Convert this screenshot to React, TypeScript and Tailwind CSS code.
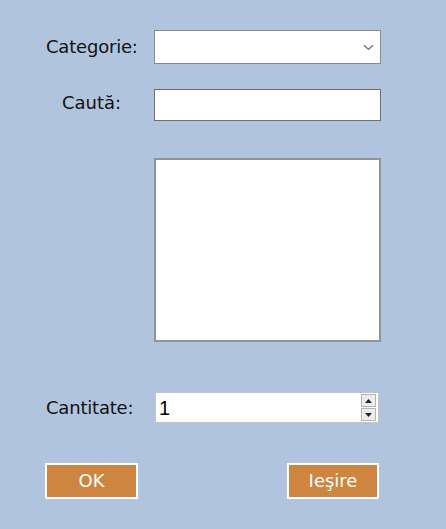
import React from "react";

export default function App() {
  return (
    <div className="w-[446px] h-[529px] bg-[#b0c4de] flex flex-col text-[#111] font-['Comic_Sans_MS','DejaVu_Sans',sans-serif]">
      {/* Categorie */}
      <div className="flex items-center mt-[30px] h-[34px]">
        <span className="ml-[46px] w-[108px] text-[18px] leading-none tracking-[-0.2px]">Categorie:</span>
        <div className="w-[227px] h-[34px] bg-white border border-[#8a8a8a] flex items-center justify-end pr-[6px]">
          <svg width="11" height="7" viewBox="0 0 11 7" fill="none">
            <path d="M1 1.2 L5.5 5.5 L10 1.2" stroke="#6b6b6b" strokeWidth="1.2" />
          </svg>
        </div>
      </div>

      {/* Cauta */}
      <div className="flex items-center mt-[25px] h-[32px]">
        <span className="ml-[62px] w-[92px] text-[18px] leading-none -mt-[4px]">Caută:</span>
        <div className="w-[227px] h-[32px] bg-white border border-[#6f6f6f]" />
      </div>

      {/* List */}
      <div className="flex mt-[37px]">
        <div className="ml-[154px] w-[227px] h-[184px] bg-white border-2 border-[#8f959c]" />
      </div>

      {/* Cantitate */}
      <div className="flex items-center mt-[50px] h-[31px]">
        <span className="ml-[46px] w-[109px] text-[18px] leading-none tracking-[-0.2px]">Cantitate:</span>
        <div className="w-[224px] h-[31px] bg-white border border-[#c4c4c4] flex items-stretch">
          <div className="flex-1 pl-[3px] flex items-center text-[20px] font-['Liberation_Sans',sans-serif] text-black">1</div>
          <div className="w-[17px] flex flex-col gap-[1px] py-[1px] pr-[2px]">
            <div className="flex-1 bg-[#ececec] border border-[#b5b5b5] flex items-center justify-center">
              <svg width="7" height="4" viewBox="0 0 7 4"><path d="M0 4 L3.5 0 L7 4 Z" fill="#222" /></svg>
            </div>
            <div className="flex-1 bg-[#ececec] border border-[#b5b5b5] flex items-center justify-center">
              <svg width="7" height="4" viewBox="0 0 7 4"><path d="M0 0 L3.5 4 L7 0 Z" fill="#222" /></svg>
            </div>
          </div>
        </div>
      </div>

      {/* Buttons */}
      <div className="flex mt-[40px]">
        <button className="ml-[45px] w-[93px] h-[36px] bg-[#cd853f] border-2 border-white text-white text-[18px] leading-none flex items-center justify-center">
          OK
        </button>
        <button className="ml-[149px] w-[92px] h-[36px] bg-[#cd853f] border-2 border-white text-white text-[18px] leading-none flex items-center justify-center">
          Ieşire
        </button>
      </div>
    </div>
  );
}
